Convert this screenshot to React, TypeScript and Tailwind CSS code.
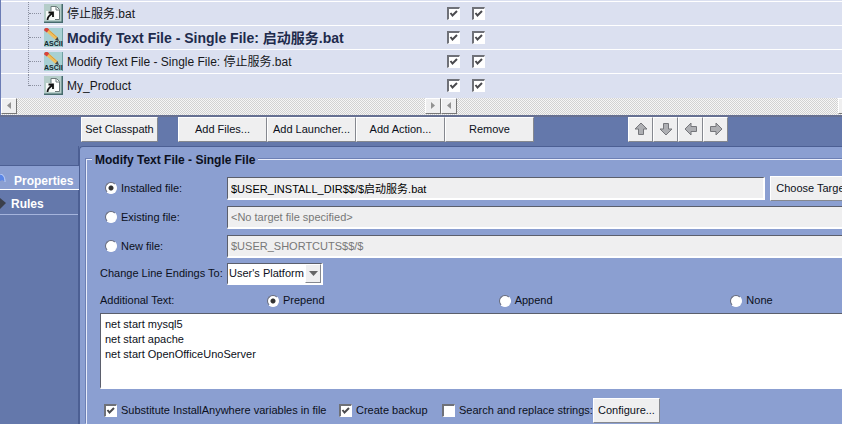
import type { ReactNode } from "react";

const sunken = "border border-r-2 border-b-2 border-[#5b5f6c] border-r-white border-b-white";

const raised =
  "border border-white border-r-[#85888f] border-b-[#85888f] bg-[#efeff0] whitespace-nowrap";

const rows = [
  { icon: "file", name: "停止服务.bat" },
  { icon: "ascii", name: "Modify Text File - Single File: 启动服务.bat", active: true },
  { icon: "ascii", name: "Modify Text File - Single File: 停止服务.bat" },
  { icon: "file", name: "My_Product" },
];

function FileIcon() {
  return (
    <svg width="19" height="19" viewBox="0 0 19 19" aria-hidden="true">
      <rect width="19" height="19" fill="#b5cdc9" />
      <path d="M0 18.250H18.250V0" fill="none" stroke="#456a6d" strokeWidth="1.500" />
      <path d="M7 2.500H12.500L15.500 5.500V15.500H7Z" fill="#fff" stroke="#6b7a7a" />
      <path d="M12 3V6H15" fill="none" stroke="#6b7a7a" />
      <rect x="2" y="7" width="9" height="9" fill="#f4f8f6" />
      <path d="M3.500 16C3.500 13 5 11.500 8 9.500M4.500 8.500H9V13" fill="none" stroke="#111" strokeWidth="1.800" />
    </svg>
  );
}

function AsciiIcon() {
  return (
    <svg width="19" height="19" viewBox="0 0 19 19" aria-hidden="true">
      <rect width="19" height="19" fill="#a8d0d3" />
      <path d="M18.500 0V19" stroke="#6fa0a3" />
      <path d="M3 2L12.500 10.500" stroke="#efbf5c" strokeWidth="3.500" />
      <path d="M4.500 2L13.500 10" stroke="#d99a3a" />
      <path d="M1 .5L4 3" stroke="#d9433b" strokeWidth="4" />
      <path d="M13.500 9L15 13L11 12Z" fill="#444" />
      <text x="0" y="18" fontSize="7" fontWeight="700" fontFamily="Liberation Sans, sans-serif" fill="#10252e">
        ASCII
      </text>
    </svg>
  );
}

function Arrow({ turn }: { turn: string }) {
  return (
    <svg className={turn} width="14" height="14" viewBox="0 0 14 14" aria-hidden="true">
      <path d="M7 1L13 7H9.500V12.500H4.500V7H1Z" fill="#aeafb3" stroke="#75767b" />
    </svg>
  );
}

function ScrollBar({ className }: { className: string }) {
  const end = "grid h-4 w-4 place-items-center border border-white border-r-[#777] border-b-[#777] bg-[#efeff0]";
  return (
    <div
      className={`flex h-[17px] justify-between bg-[#e6e6e6] bg-[repeating-conic-gradient(#d2d2d2_0_25%,#f6f6f6_0_50%)] bg-[length:2px_2px] ${className}`}
    >
      <button className={end} aria-label="Scroll left">
        <svg width="4" height="7" viewBox="0 0 4 7">
          <path d="M4 0V7L0 3.500Z" fill="#929292" />
        </svg>
      </button>
      <button className={end} aria-label="Scroll right">
        <svg width="4" height="7" viewBox="0 0 4 7">
          <path d="M0 0V7L4 3.500Z" fill="#929292" />
        </svg>
      </button>
    </div>
  );
}

function CheckBox({ label, checked }: { label?: string; checked?: boolean }) {
  return (
    <span className="grid h-[13px] w-[13px] shrink-0">
      <input
        type="checkbox"
        aria-label={label}
        defaultChecked={checked}
        className="peer col-start-1 row-start-1 h-[13px] w-[13px] appearance-none border-t-2 border-r border-b border-l-2 border-[#6f7178] border-r-white border-b-white bg-white"
      />
      <svg
        className="pointer-events-none invisible col-start-1 row-start-1 peer-checked:visible"
        width="13"
        height="13"
        viewBox="0 0 13 13"
        aria-hidden="true"
      >
        <path d="M3.500 6L5.500 8.500L10 4" fill="none" stroke="#4a4a4e" strokeWidth="2" />
      </svg>
    </span>
  );
}

function Tree() {
  return (
    <div className="border-l border-[#6b7cb5] bg-[#dbe0f0] pt-px">
      <table className="w-full table-fixed border-collapse text-[12px] leading-4 text-[#17181c]">
        <tbody>
          {rows.map((row, i) => (
            <tr key={row.name} className="h-6 border-t border-white">
              <td className="w-[440px] p-0">
                <div className="flex h-[23px] items-center">
                  <span
                    className={`ml-[27px] w-px border-l border-dotted border-[#8b90a0] ${i === rows.length - 1 ? "h-3 self-start" : "h-full"}`}
                  />
                  <span className="mr-[3px] w-3 border-t border-dotted border-[#8b90a0]" />
                  {row.icon === "file" ? <FileIcon /> : <AsciiIcon />}
                  <span className={`ml-1 whitespace-nowrap ${row.active ? "text-[14px] font-bold text-[#1e2b4c]" : ""}`}>
                    {row.name}
                  </span>
                </div>
              </td>
              <td className="w-[25px] p-0 pl-1.5">
                <CheckBox label="Include" checked />
              </td>
              <td className="p-0 pl-1.5">
                <CheckBox label="Install" checked />
              </td>
            </tr>
          ))}
        </tbody>
      </table>
      <div className="flex">
        <ScrollBar className="w-[440px]" />
        <ScrollBar className="-mr-3 flex-1" />
      </div>
    </div>
  );
}

function Toolbar() {
  const button = `${raised} h-[25px] text-center`;
  return (
    <div className="flex h-[31px] shrink-0 border-t-2 border-[#667092] pl-[81px]">
      <button className={`${button} mr-5 w-[77px]`}>Set Classpath</button>
      <button className={`${button} w-[89px]`}>Add Files...</button>
      <button className={`${button} w-[89px]`}>Add Launcher...</button>
      <button className={`${button} w-[89px]`}>Add Action...</button>
      <button className={`${button} mr-[94px] w-[89px]`}>Remove</button>
      {[
        ["Up", "rotate-0"],
        ["Down", "rotate-180"],
        ["Left", "-rotate-90"],
        ["Right", "rotate-90"],
      ].map(([label, turn]) => (
        <button key={label} aria-label={label} className={`${raised} grid h-[25px] w-[25px] place-items-center`}>
          <Arrow turn={turn} />
        </button>
      ))}
    </div>
  );
}

function Radio({ name, label, checked }: { name: string; label: string; checked?: boolean }) {
  return (
    <label className="flex items-center gap-1">
      <input
        type="radio"
        name={name}
        defaultChecked={checked}
        className="h-3 w-3 appearance-none rounded-full border border-[#65697a] border-r-white border-b-white bg-white checked:bg-[radial-gradient(circle,#333_0_2px,#fff_3px)]"
      />
      {label}
    </label>
  );
}

function FileRow({ label, value, checked, children }: { label: string; value: string; checked?: boolean; children?: ReactNode }) {
  return (
    <div className="flex h-[23px] items-center">
      <div className="w-[122px] shrink-0">
        <Radio name="target" label={label} checked={checked} />
      </div>
      <input
        type="text"
        aria-label={label}
        defaultValue={value}
        disabled={!checked}
        className={`${sunken} h-[23px] min-w-0 flex-1 bg-[#efeff0] px-[3px] text-black disabled:text-[#777]`}
      />
      {children}
    </div>
  );
}

function Check({ label, checked }: { label: string; checked?: boolean }) {
  return (
    <label className="flex items-center gap-1 whitespace-nowrap">
      <CheckBox checked={checked} />
      {label}
    </label>
  );
}

function Properties() {
  return (
    <main className="min-w-0 flex-1 overflow-hidden rounded-tl border-t border-l border-[#4c5f93] bg-[#8b9fd1] pt-[5px] pl-1.5">
      <fieldset className="-mr-30 h-full border border-r-0 border-b-0 border-[#e8edfb] pl-[13px] shadow-[-1px_-1px_0_#6d80b5]">
        <legend className="-ml-2 bg-[#8b9fd1] px-[3px] text-[12px] leading-4 font-bold">Modify Text File - Single File</legend>
        <div className="flex flex-col gap-1.5 pt-[9px] pl-[5px]">
          <FileRow label="Installed file:" value="$USER_INSTALL_DIR$$/$启动服务.bat" checked>
            <button className={`${raised} mr-[99px] ml-[5px] h-[25px] w-[93px] shrink-0`}>Choose Target...</button>
          </FileRow>
          <FileRow label="Existing file:" value="<No target file specified>" />
          <FileRow label="New file:" value="$USER_SHORTCUTS$$/$" />
        </div>
        <div className="mt-[5px] flex items-center">
          <label htmlFor="endings" className="w-[127px]">
            Change Line Endings To:
          </label>
          <span className="relative">
            <select id="endings" className={`${sunken} h-[22px] w-24 appearance-none bg-white pl-px`}>
              <option>User's Platform</option>
            </select>
            <span className={`${raised} pointer-events-none absolute top-px right-0.5 grid h-[19px] w-4 place-items-center`}>
              <svg width="9" height="5" viewBox="0 0 9 5">
                <path d="M0 0H9L4.500 5Z" fill="#666" />
              </svg>
            </span>
          </span>
        </div>
        <div className="mt-1.5 grid h-5 grid-cols-[167px_1fr_1fr_1fr] items-center">
          <label htmlFor="extra">Additional Text:</label>
          <Radio name="place" label="Prepend" checked />
          <Radio name="place" label="Append" />
          <Radio name="place" label="None" />
        </div>
        <textarea
          id="extra"
          className={`${sunken} mt-0.5 block h-[76px] w-full resize-none bg-white px-1 py-[3px] leading-[15px]`}
          defaultValue={"net start mysql5\nnet start apache\nnet start OpenOfficeUnoServer"}
        />
        <div className="mt-[9px] flex items-center pl-1">
          <div className="w-[235px]">
            <Check label="Substitute InstallAnywhere variables in file" checked />
          </div>
          <div className="w-[103px]">
            <Check label="Create backup" checked />
          </div>
          <div className="w-[151px]">
            <Check label="Search and replace strings:" />
          </div>
          <button className={`${raised} h-[25px] w-[67px]`}>Configure...</button>
        </div>
      </fieldset>
    </main>
  );
}

export default function App() {
  return (
    <div className="flex min-h-screen flex-col overflow-hidden bg-[#6478ab] font-['Liberation_Sans','Noto_Sans_CJK_SC',sans-serif] text-[11px] leading-[15px] text-[#0c1020]">
      <Tree />
      <Toolbar />
      <div className="flex flex-1">
        <nav className="w-[79px] shrink-0 border-r border-[#4c5f93] pt-[19px] text-[12px] leading-4 font-bold text-white">
          <a href="#properties" className="-mr-px flex h-[25px] items-center border-t border-b border-t-[#4c5f93] border-b-white bg-[#8b9fd1] pt-2">
            <svg width="14" height="14" viewBox="0 0 14 14" aria-hidden="true">
              <path d="M0 0C3 0 5 3 5 8C3 6 2 6 0 7Z" fill="#5b86e6" />
              <path d="M0 0C3 0 5 3 5 8" fill="none" stroke="#c4d6fb" />
            </svg>
            Properties
          </a>
          <a href="#rules" className="flex h-[25px] items-center border-b border-[#a5b4dc] pt-1">
            <svg width="11" height="12" viewBox="0 0 11 12" aria-hidden="true">
              <path d="M0 0L6 5L0 11Z" fill="#3b3f4a" />
            </svg>
            Rules
          </a>
        </nav>
        <Properties />
      </div>
    </div>
  );
}
